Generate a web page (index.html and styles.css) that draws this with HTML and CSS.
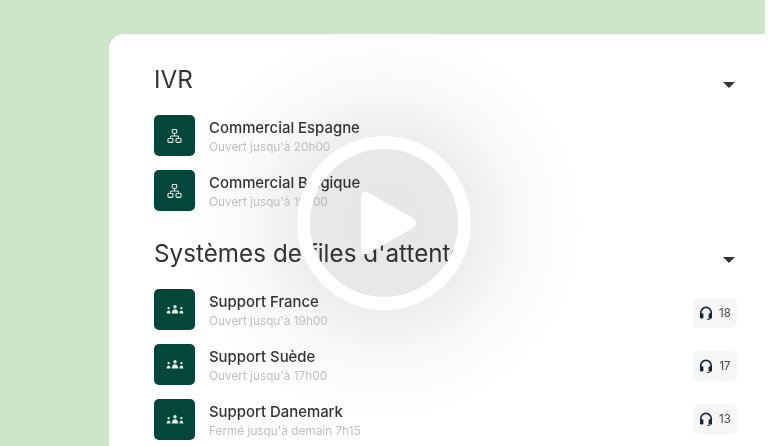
FILE: index.html
```html
<!DOCTYPE html>
<html lang="fr">
<head>
<meta charset="utf-8">
<title>IVR</title>
<link rel="stylesheet" href="styles.css">
</head>
<body>
<svg class="defs" width="0" height="0" aria-hidden="true">
  <symbol id="tree" viewBox="0 0 16 16">
    <g fill="none" stroke="currentColor" stroke-width="1.15">
      <rect x="5.6" y="1" width="4.8" height="4" rx="0.9"/>
      <rect x="1" y="10.6" width="5.4" height="4.2" rx="1"/>
      <rect x="9.6" y="10.6" width="5.4" height="4.2" rx="1"/>
      <path d="M8 5v3M3.7 10.6V9a1 1 0 0 1 1-1h6.6a1 1 0 0 1 1 1v1.6"/>
    </g>
  </symbol>
  <symbol id="team" viewBox="0 0 18 9">
    <g fill="currentColor">
      <circle cx="9" cy="1.7" r="1.7"/>
      <path d="M5.800 8.500c0-2.600 1.200-4.300 3.200-4.300s3.200 1.700 3.200 4.300z"/>
      <circle cx="2.600" cy="3.200" r="1.150"/>
      <path d="M.7 8.500c0-2 .7-3.100 1.900-3.100s1.900 1.100 1.900 3.100z"/>
      <circle cx="15.400" cy="3.200" r="1.150"/>
      <path d="M13.500 8.500c0-2 .7-3.100 1.900-3.100s1.900 1.100 1.900 3.100z"/>
    </g>
  </symbol>
  <symbol id="headset" viewBox="0 0 14 14">
    <path d="M1.800 8V6.600a5.200 5.200 0 0 1 10.400 0V8" fill="none" stroke="currentColor" stroke-width="1.600"/>
    <rect x="1" y="7.200" width="3.400" height="5.200" rx="1.200" fill="currentColor"/>
    <rect x="9.600" y="7.200" width="3.400" height="5.200" rx="1.200" fill="currentColor"/>
    <path d="M12 11.500c0 1.200-1 1.800-2 1.800H8" fill="none" stroke="currentColor" stroke-width="1"/>
  </symbol>
</svg>
<div class="page">
  <main class="card">
    <div class="glow"></div>
    <section class="group">
      <header class="group-head">
        <h2 class="group-title">IVR</h2>
        <span class="caret"></span>
      </header>
      <ul class="rows">
        <li class="row">
          <span class="tile"><svg class="ico-tree"><use href="#tree"/></svg></span>
          <div class="info"><div class="name">Commercial Espagne</div><div class="sub">Ouvert jusqu'à 20h00</div></div>
        </li>
        <li class="row">
          <span class="tile"><svg class="ico-tree"><use href="#tree"/></svg></span>
          <div class="info"><div class="name">Commercial Belgique</div><div class="sub">Ouvert jusqu'à 19h00</div></div>
        </li>
      </ul>
    </section>
    <section class="group group-second">
      <header class="group-head">
        <h2 class="group-title">Systèmes de files d'attente</h2>
        <span class="caret"></span>
      </header>
      <div class="columns">
        <ul class="rows">
          <li class="row">
            <span class="tile"><svg class="ico-team"><use href="#team"/></svg></span>
            <div class="info"><div class="name">Support France</div><div class="sub">Ouvert jusqu'à 19h00</div></div>
          </li>
          <li class="row">
            <span class="tile"><svg class="ico-team"><use href="#team"/></svg></span>
            <div class="info"><div class="name">Support Suède</div><div class="sub">Ouvert jusqu'à 17h00</div></div>
          </li>
          <li class="row">
            <span class="tile"><svg class="ico-team"><use href="#team"/></svg></span>
            <div class="info"><div class="name">Support Danemark</div><div class="sub">Fermé jusqu'à demain 7h15</div></div>
          </li>
        </ul>
        <div class="badges">
          <span class="badge"><svg class="ico-headset"><use href="#headset"/></svg>18</span>
          <span class="badge"><svg class="ico-headset"><use href="#headset"/></svg>17</span>
          <span class="badge"><svg class="ico-headset"><use href="#headset"/></svg>13</span>
        </div>
      </div>
    </section>
  </main>
  <div class="play">
    <svg class="play-svg" viewBox="0 0 174 174">
      <circle class="play-disc" cx="87" cy="87" r="74"/>
      <circle class="play-ring" cx="87" cy="87" r="80.5"/>
      <path class="play-tri" d="M72 57 L116 82 Q122 87 116 92 L72 117 Q64 121 64 112 V62 Q64 53 72 57Z"/>
    </svg>
  </div>
</div>
</body>
</html>
```

FILE: styles.css
```css
* { box-sizing: border-box; }
html, body { margin: 0; padding: 0; height: 100%; background: #fff; overflow: hidden; }
body { font-family: Inter, "Liberation Sans", sans-serif; color: #333; }
.defs { position: absolute; }
.page {
  position: relative;
  width: 765px;
  height: 446px;
  background: #cfe5cb;
  padding: 34px 0 0 109px;
  overflow: hidden;
  filter: blur(0.35px);
}
.card {
  position: relative;
  overflow: hidden;
  background: #fff;
  border-radius: 15px 0 0 0;
  height: 500px;
  padding: 31px 28px 0 45px;
}
.group { position: relative; }
.group-second { margin-top: 29px; }
.group-head {
  display: flex;
  justify-content: space-between;
  align-items: center;
  height: 30px;
}
.group-title {
  margin: 0;
  font-size: 24.2px;
  letter-spacing: .04px;
  font-weight: 400;
  line-height: 30px;
  color: #333;
}
.group-second .group-title { margin-bottom: 2px; }
.caret {
  width: 0;
  height: 0;
  margin: 10px 2px 0 0;
  border-left: 6px solid transparent;
  border-right: 6px solid transparent;
  border-top: 6px solid #333;
}
.rows {
  list-style: none;
  margin: 20px 0 0;
  padding: 0;
  display: flex;
  flex-direction: column;
  gap: 14px;
  flex: 1;
}
.columns { display: flex; align-items: flex-start; }
.columns .rows { margin-top: 19px; }
.row { display: flex; align-items: center; height: 41px; }
.tile {
  width: 41px;
  height: 41px;
  flex: none;
  border-radius: 5px;
  background: #03463a;
  color: #e3eee6;
  display: flex;
  align-items: center;
  justify-content: center;
}
.ico-tree { width: 15px; height: 16px; }
.ico-team { width: 18px; height: 9px; }
.info { margin-left: 14px; flex: 1; padding-top: 5px; }
.name { font-size: 14.9px; font-weight: 500; line-height: 18px; color: #333; }
.sub { font-size: 11.8px; line-height: 20px; color: #c0c0c0; }
.badges {
  display: flex;
  flex-direction: column;
  gap: 23px;
  margin-top: 28px;
  flex: none;
}
.badge {
  width: 44px;
  height: 30px;
  border-radius: 6px;
  background: #f6f6f6;
  display: flex;
  align-items: center;
  justify-content: center;
  gap: 6px;
  font-size: 11.5px;
  color: #444;
}
.ico-headset { width: 14px; height: 14px; color: #1c2434; }
.glow {
  position: absolute;
  left: 75px;
  top: -11px;
  width: 400px;
  height: 400px;
  border-radius: 50%;
  pointer-events: none;
  background: radial-gradient(circle closest-side, rgba(0,0,0,.07) 0, rgba(0,0,0,.065) 45%, rgba(0,0,0,.025) 68%, rgba(0,0,0,.006) 88%, rgba(0,0,0,0) 100%);
}
.play { position: absolute; left: 297px; top: 136px; width: 174px; height: 174px; }
.play-svg { display: block; width: 174px; height: 174px; }
.play-disc { fill: rgba(0,0,0,.025); }
.play-ring { fill: none; stroke: #fff; stroke-width: 13; }
.play-tri { fill: #fff; }
```
